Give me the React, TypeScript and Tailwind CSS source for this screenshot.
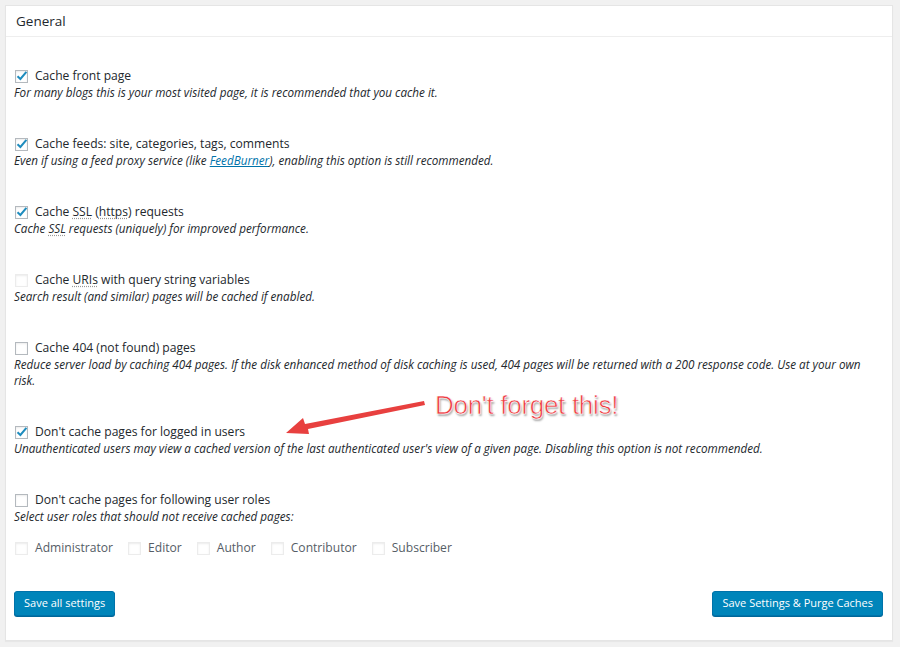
import type { ReactNode } from "react";

const sans = { fontFamily: '"Open Sans", "Noto Sans", sans-serif' };

function Box({ checked = false, faint = false }: { checked?: boolean; faint?: boolean }) {
  return (
    <span
      className={
        "relative inline-block w-[13px] h-[13px] shrink-0 bg-white border shadow-[inset_0_1px_2px_rgba(0,0,0,0.08)] " +
        (faint ? "border-[#ececec]" : "border-[#b4b9be]")
      }
    >
      {checked && (
        <svg className="absolute left-[-1px] top-[-2px]" width="14" height="14" viewBox="0 0 14 14">
          <path d="M2.5 7.2 L5.4 10 L11.4 2.8" fill="none" stroke="#1e8cbe" strokeWidth="2" strokeLinejoin="miter" />
        </svg>
      )}
    </span>
  );
}

function Abbr({ children }: { children: ReactNode }) {
  return <span className="underline decoration-dotted decoration-[#999] underline-offset-2">{children}</span>;
}

function Item({
  checked,
  faint,
  label,
  desc,
}: {
  checked?: boolean;
  faint?: boolean;
  label: ReactNode;
  desc: ReactNode;
}) {
  return (
    <div className="mb-[36px]">
      <div className="flex items-center h-[16px]">
        <span className="ml-[1px] mr-[7px] flex">
          <Box checked={checked} faint={faint} />
        </span>
        <span className="text-[12.1px] leading-[16px] text-[#23282d]">{label}</span>
      </div>
      <div className="text-[11.7px] leading-[16px] italic text-[#23282d] pr-[10px]">{desc}</div>
    </div>
  );
}

const roles = ["Administrator", "Editor", "Author", "Contributor", "Subscriber"];

export default function App() {
  return (
    <div className="w-[900px] h-[647px] bg-[#f1f1f1] pt-[5px] pl-[5px] pr-[7px]" style={sans}>
      <div className="relative h-[636px] bg-white border border-[#e5e5e5] shadow-[0_1px_1px_rgba(0,0,0,0.04)]">
        <div className="h-[31px] border-b border-[#eeeeee] pl-[10px] flex items-center text-[13.5px] text-[#23282d]">
          General
        </div>

        <div className="pl-[8px] pt-[31px]">
          <Item
            checked
            label="Cache front page"
            desc="For many blogs this is your most visited page, it is recommended that you cache it."
          />
          <Item
            checked
            label="Cache feeds: site, categories, tags, comments"
            desc={
              <>
                Even if using a feed proxy service (like{" "}
                <span className="text-[#0073aa] underline">FeedBurner</span>), enabling this option is still
                recommended.
              </>
            }
          />
          <Item
            checked
            label={
              <>
                Cache <Abbr>SSL</Abbr> (<Abbr>https</Abbr>) requests
              </>
            }
            desc={
              <>
                Cache <Abbr>SSL</Abbr> requests (uniquely) for improved performance.
              </>
            }
          />
          <Item
            faint
            label={
              <>
                Cache <Abbr>URIs</Abbr> with query string variables
              </>
            }
            desc="Search result (and similar) pages will be cached if enabled."
          />
          <Item
            label="Cache 404 (not found) pages"
            desc="Reduce server load by caching 404 pages. If the disk enhanced method of disk caching is used, 404 pages will be returned with a 200 response code. Use at your own risk."
          />
          <Item
            checked
            label="Don't cache pages for logged in users"
            desc="Unauthenticated users may view a cached version of the last authenticated user's view of a given page. Disabling this option is not recommended."
          />

          <div className="flex items-center h-[16px]">
            <span className="ml-[1px] mr-[7px] flex">
              <Box />
            </span>
            <span className="text-[12.1px] leading-[16px] text-[#23282d]">Don't cache pages for following user roles</span>
          </div>
          <div className="text-[11.7px] leading-[16px] italic text-[#23282d]">
            Select user roles that should not receive cached pages:
          </div>
          <div className="mt-[16px] flex items-center h-[16px] gap-[14px]">
            {roles.map((r) => (
              <div key={r} className="flex items-center">
                <span className="ml-[1px] mr-[7px] flex">
                  <Box faint />
                </span>
                <span className="text-[12.1px] leading-[16px] text-[#555d66]">{r}</span>
              </div>
            ))}
          </div>

          <div className="mt-[35px] flex justify-between pr-[9px]">
            <button className="h-[25px] px-[9px] rounded-[3px] bg-[#0085ba] border border-[#0073aa] text-white text-[11px] shadow-[0_1px_0_#006799]">
              Save all settings
            </button>
            <button className="h-[25px] px-[9px] rounded-[3px] bg-[#0085ba] border border-[#0073aa] text-white text-[11px] shadow-[0_1px_0_#006799]">
              Save Settings &amp; Purge Caches
            </button>
          </div>
        </div>

        {/* annotation */}
        <svg className="absolute left-[268px] top-[385px]" width="160" height="55" viewBox="0 0 160 55">
          <polygon points="150,10 151,14 34,38 35,43 12,42 29,27 31,33" fill="#e8403f" />
        </svg>
        <div
          className="absolute left-[429px] top-[384px] text-[26px] leading-[30px] text-[#ee3a3f] tracking-[-0.3px]"
          style={{
            fontFamily: '"Liberation Sans", Arial, sans-serif',
            WebkitTextStroke: "0.6px #ffffff",
            textShadow: "1px 2px 2px rgba(0,0,0,0.35)",
          }}
        >
          Don't forget this!
        </div>
      </div>
    </div>
  );
}
